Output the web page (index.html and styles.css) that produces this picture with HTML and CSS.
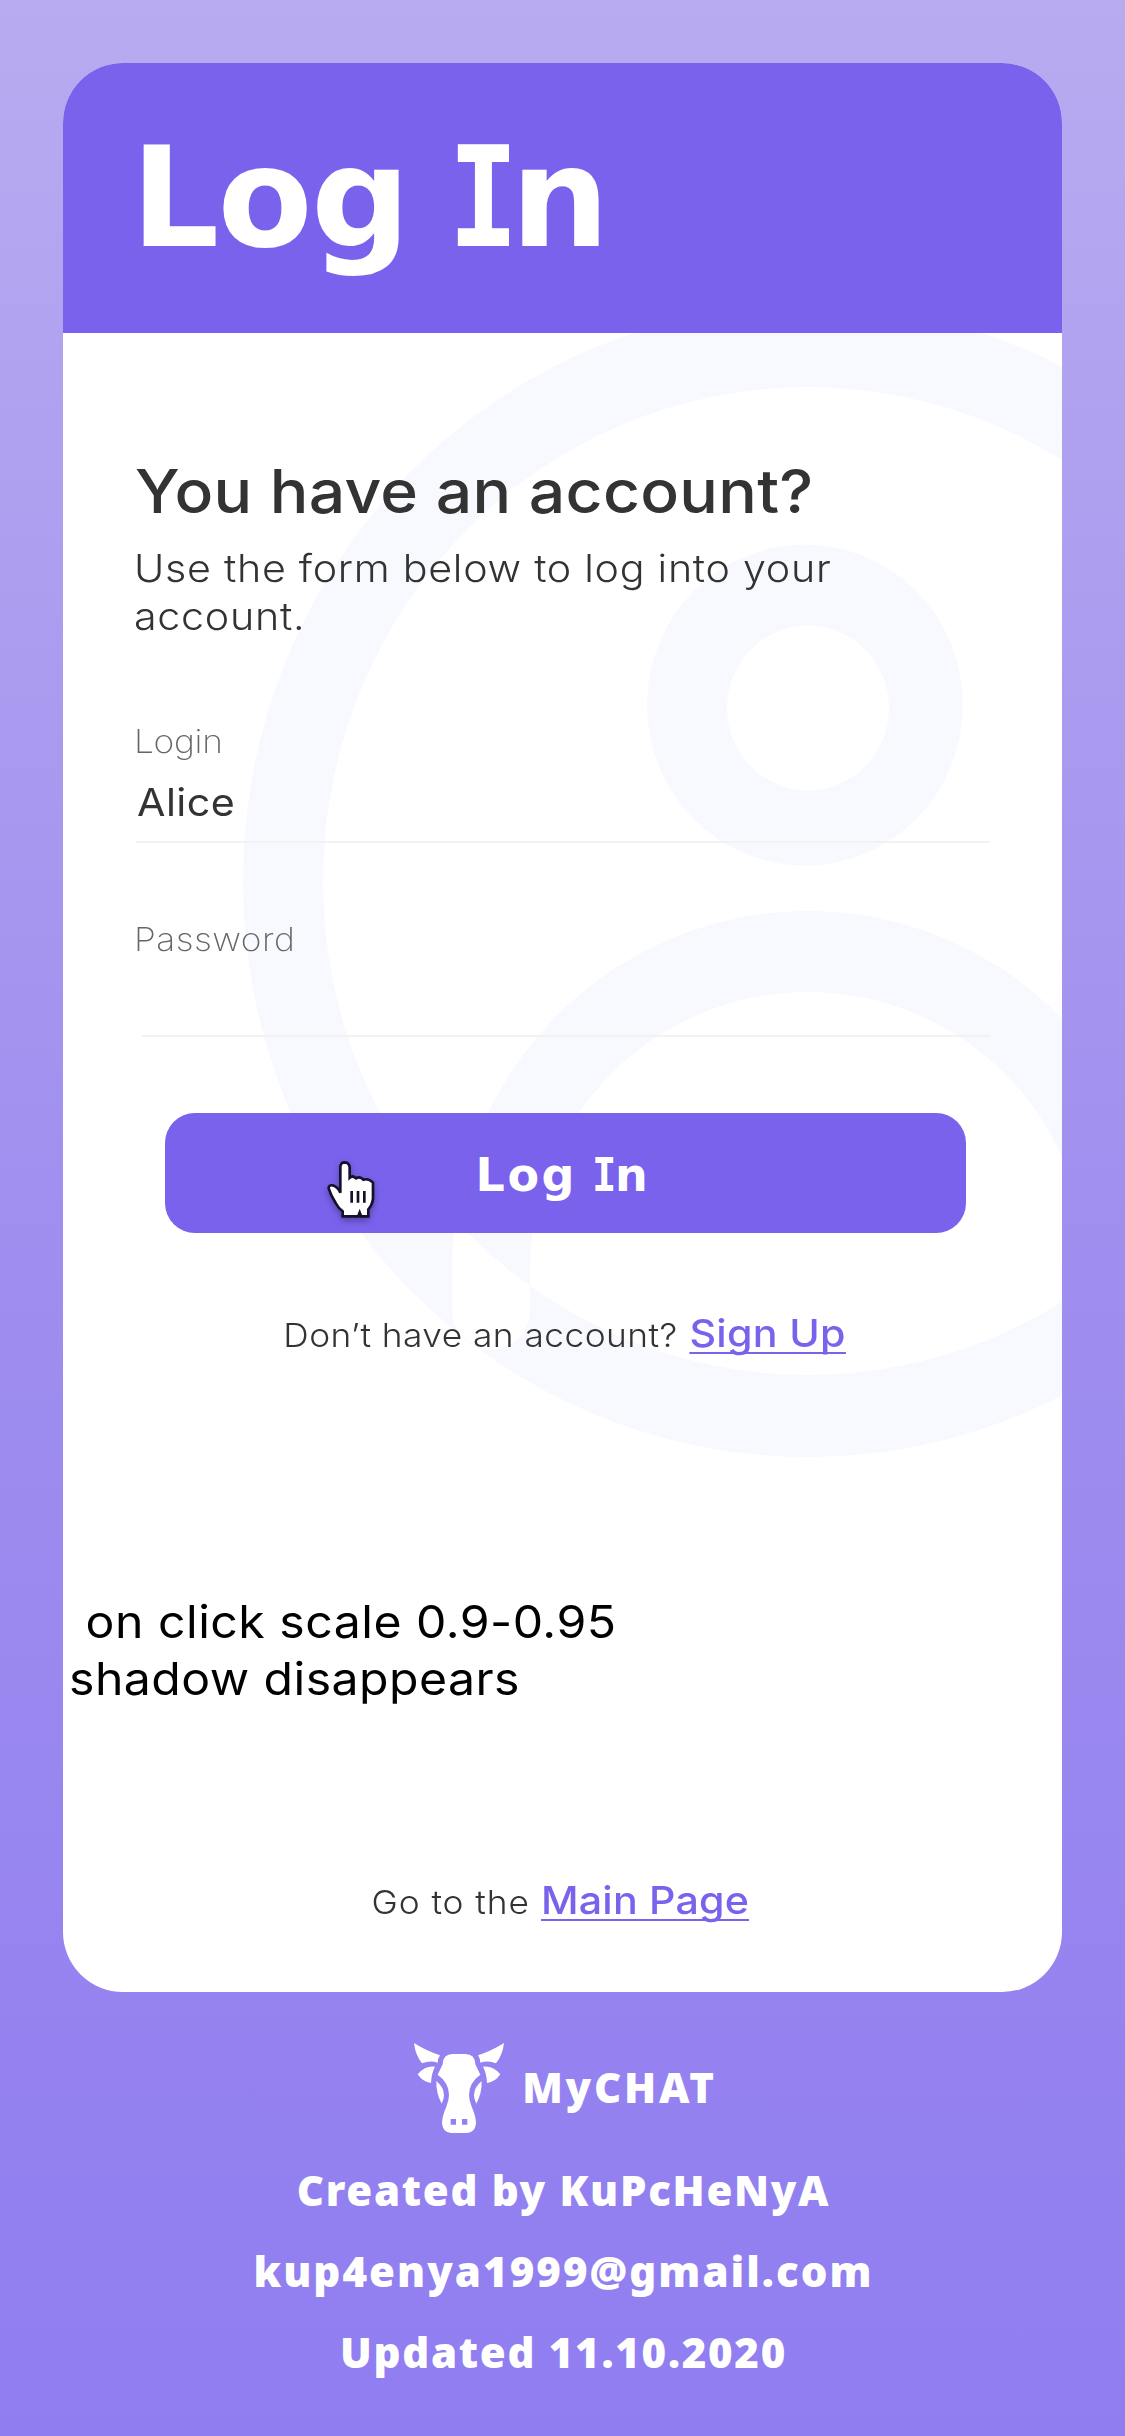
FILE: index.html
```
<!DOCTYPE html>
<html lang="en">
<head>
<meta charset="utf-8">
<title>Log In</title>
<link rel="stylesheet" href="styles.css">
</head>
<body>
<main class="card">
  <header class="card-header">
    <h1 class="title">Log <span class="slab">I</span><span class="tail">n</span></h1>
  </header>
  <section class="card-body">
    <svg class="backdrop" viewBox="63 333 999 1659" aria-hidden="true">
      <path fill="#f8f9ff" fill-rule="evenodd" d="M243 881a565 576 0 1 0 1130 0a565 576 0 1 0 -1130 0zM323 881a485 494 0 1 0 970 0a485 494 0 1 0 -970 0zM647 705a158 160.500 0 1 0 316 0a158 160.500 0 1 0 -316 0zM727 708a81 82.500 0 1 0 162 0a81 82.500 0 1 0 -162 0zM452 1310V1270A356 359 0 0 1 1164 1270V1310A39 40 0 0 1 1086 1310V1270A278 278 0 0 0 530 1270V1310A39 40 0 0 1 452 1310z"/>
    </svg>
    <h2 class="heading">You have an account?</h2>
    <p class="lead">Use the form below to log into your account.</p>
    <form class="form">
      <label class="label" for="login">Login</label>
      <div class="field"><input class="input" id="login" type="text" value="Alice"></div>
      <label class="label label-password" for="password">Password</label>
      <div class="field field-password"><input class="input" id="password" type="password"></div>
      <button class="submit" type="button">
        <span class="submit-text">Log <span class="slab">I</span><span class="tail">n</span></span>
        <svg class="cursor" viewBox="0 0 270 300" aria-hidden="true">
          <path fill="#fff" stroke="#15102b" stroke-width="8" d="M91 158V80Q92 67 104 67Q118 68 119 82V113Q128 105 138 115Q150 107 160 119Q176 114 189 128V176Q187 195 175 208V229H153L149 220L145 229H98V214Q84 203 77 189Q63 167 56 145Q56 134 68 136Q84 141 91 158z"/>
          <path fill="#15102b" d="M149 206L140 232H158z"/>
          <path fill="none" stroke="#15102b" stroke-width="8" d="M125 153V188M144 153V188M163 153V188"/>
        </svg>
      </button>
    </form>
    <p class="row signup"><span>Don’t have an account?</span><a class="link" href="#">Sign Up</a></p>
    <div class="note">
      <p class="note-first">on click scale 0.9-0.95</p>
      <p>shadow disappears</p>
    </div>
    <p class="row home"><span>Go to the</span><a class="link" href="#">Main Page</a></p>
  </section>
</main>
<footer class="footer">
  <div class="brand">
    <svg class="logo" viewBox="42 39 270 270" aria-hidden="true">
      <g id="side" fill="#fff">
        <path d="M42 39Q80 63 120 76Q112 88 113 98Q90 90 66 100Q46 75 42 39z"/>
        <path d="M53 133Q75 106 105 110Q94 130 93 159Q68 156 53 133z"/>
        <path d="M109 153Q132 172 132 196Q132 208 125 221Q108 190 109 153z"/>
      </g>
      <use href="#side" transform="matrix(-1 0 0 1 354 0)"/>
      <path fill="#fff" fill-rule="evenodd" d="M158 72H196Q225 72 226 103L241 134Q207 158 207 195Q207 210 215 230Q228 260 228 280Q226 307 202 309H152Q128 307 126 280Q126 260 139 230Q147 210 147 195Q147 158 113 134L128 103Q129 72 158 72zM152 267V284H168V267zM186 267V284H202V267z"/>
    </svg>
    <span class="brand-name">MyCHAT</span>
  </div>
  <p>Created by KuPcHeNyA</p>
  <p class="mail">kup4enya1999@gmail.com</p>
  <p>Updated 11.10.2020</p>
</footer>
</body>
</html>
```
FILE: styles.css
```
* { box-sizing: border-box; }

body {
  margin: 0;
  min-height: 2436px;
  padding: 63px 63px 0;
  background: linear-gradient(180deg, #b8abf0 0%, #a08fef 50%, #9582f0 85%, #907df0 100%);
  font-family: Inter, "Open Sans", sans-serif;
  color: #333;
}

h1, h2, p { margin: 0; }

.card {
  height: 1929px;
  border-radius: 60px;
  background: #fff;
  overflow: hidden;
}

.card-header {
  height: 270px;
  padding: 54px 0 0 68px;
  background: #7a62ec;
}

.title {
  font: 700 138.5px/162px "DejaVu Sans", sans-serif;
  letter-spacing: -1.7px;
  word-spacing: -7.3px;
  color: #fff;
}

.slab {
  display: inline-block;
  font-family: "DejaVu Sans Mono", monospace;
  transform-origin: left;
}

.title .slab { transform: scaleX(0.85); }
.title .tail { margin-left: -18.7px; }

.card-body {
  position: relative;
  height: 1659px;
  padding: 122px 72px 0 73px;
}

.card-body > * { position: relative; }

.card-body > .backdrop {
  position: absolute;
  left: 0;
  top: 0;
  width: 999px;
  height: 1659px;
}

/* Inter is drawn slightly extended throughout the card */
.heading, .lead, .label, .input, .note {
  transform: scaleX(1.07);
  transform-origin: left;
}

.row { transform: scaleX(1.07); }

.heading {
  margin-left: -1px;
  font-size: 60px;
  font-weight: 500;
  line-height: 72px;
  letter-spacing: 0.27px;
}

.lead {
  max-width: 710px;
  margin: 17px 0 0 -2px;
  font-size: 38.5px;
  font-weight: 300;
  line-height: 48px;
  letter-spacing: 0.67px;
}

.form {
  display: flex;
  flex-direction: column;
  padding-top: 81px;
}

.label {
  align-self: flex-start;
  margin-left: -2px;
  font-size: 33px;
  font-weight: 200;
  line-height: 40px;
  letter-spacing: -0.3px;
  color: #666;
}

.label-password {
  margin-top: 76px;
  letter-spacing: 0.45px;
}

.field {
  height: 64px;
  margin-top: 18px;
  border-bottom: 2px solid #f2f2f2;
}

.field-password { margin: 14px 0 0 6px; }

.input {
  display: block;
  width: 780px;
  height: 46px;
  padding: 0 0 0 1px;
  border: 0;
  background: none;
  font: 400 38.5px/46px Inter, "Open Sans", sans-serif;
  letter-spacing: 0.4px;
  color: #333;
  outline: 0;
}

.submit {
  position: relative;
  width: 801px;
  height: 120px;
  margin: 76px 0 0 29px;
  padding: 3px 5px 0 0;
  border: 0;
  border-radius: 30px;
  background: #7a62ec;
  font: 700 46px/54px "DejaVu Sans", sans-serif;
  letter-spacing: 2.54px;
  word-spacing: -4.1px;
  color: #fff;
}

.submit .slab { transform: scaleX(0.89); }
.submit .tail { margin-left: -6.7px; }

.cursor {
  position: absolute;
  left: 145px;
  top: 27px;
  width: 90px;
  height: 100px;
  overflow: visible;
  filter: drop-shadow(0 3px 3px rgba(0, 0, 0, 0.3));
}

.row {
  display: flex;
  justify-content: center;
  align-items: baseline;
  height: 46px;
  font-size: 33px;
  font-weight: 300;
  line-height: 46px;
  letter-spacing: 0.42px;
}

.link {
  font-size: 38.5px;
  font-weight: 500;
  letter-spacing: 0.3px;
  color: #7a62ec;
  text-decoration: underline 2px;
  text-decoration-skip-ink: none;
  text-underline-offset: 5px;
}

.signup { gap: 11px; margin-top: 77px; padding-left: 3px; }
.home { gap: 10.5px; margin-top: 170px; padding-right: 5px; letter-spacing: 0.85px; }
.home .link { letter-spacing: 0.16px; }

.note {
  margin: 237px 0 0 -67px;
  font-size: 45px;
  line-height: 57px;
  letter-spacing: 0.43px;
  color: #000;
}

.note-first { padding-left: 15.5px; letter-spacing: 0.47px; }

.footer {
  display: flex;
  flex-direction: column;
  align-items: center;
  gap: 24px;
  padding: 51px 0 0 2px;
  font: 900 42px/57px "Noto Sans", sans-serif;
  letter-spacing: 1.7px;
  color: #fff;
}

.brand {
  display: flex;
  align-items: center;
  gap: 18px;
  height: 90px;
  margin: 0 0 4px 4px;
}

.logo { width: 90px; height: 90px; }

.brand-name { margin-top: -3px; letter-spacing: 2.76px; }

.mail { letter-spacing: 2.03px; }
```
